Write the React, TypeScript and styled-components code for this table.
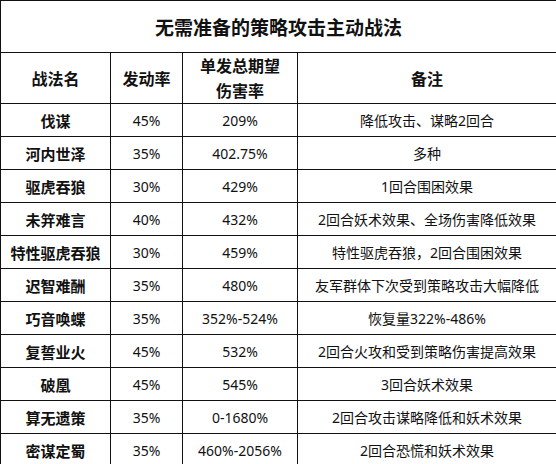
import React from 'react'
import styled, { createGlobalStyle } from 'styled-components'

const GlobalStyle = createGlobalStyle`
  html, body {
    margin: 0;
    padding: 0;
    background: #ffffff;
  }
  body {
    font-family: 'Noto Sans', 'Noto Sans CJK SC', sans-serif;
    color: #111;
  }
`

const TableContainer = styled.table`
  width: 556px;
  border-collapse: collapse;
  table-layout: fixed;
  background: #fff;
`

const Col = styled.col<{ w: number }>`
  width: ${({ w }) => w}px;
`

const Cell = styled.td`
  border: 1px solid #111;
  padding: 0;
  text-align: center;
  vertical-align: middle;
  white-space: nowrap;
`

const TitleCell = styled(Cell).attrs({ as: 'th' })`
  height: 51px;
  font-family: 'Noto Sans CJK SC', sans-serif;
  font-size: 19px;
  font-weight: 700;
  letter-spacing: 0;
`

const HeaderCell = styled(Cell).attrs({ as: 'th' })`
  height: 47px;
  font-family: 'Noto Sans CJK SC', sans-serif;
  font-size: 16px;
  font-weight: 700;
  line-height: 25px;
`

const TableRow = styled.tr`
  height: 33px;
`

const NameCell = styled(Cell)`
  height: 32px;
  font-family: 'Noto Sans CJK SC', sans-serif;
  font-size: 15px;
  font-weight: 700;
`

const DataCell = styled(Cell)`
  height: 32px;
  font-size: 14px;
  font-weight: 400;
`

interface Tactic {
  name: string
  rate: string
  damage: string
  note: string
}

const tactics: Tactic[] = [
  { name: '伐谋', rate: '45%', damage: '209%', note: '降低攻击、谋略2回合' },
  { name: '河内世泽', rate: '35%', damage: '402.75%', note: '多种' },
  { name: '驱虎吞狼', rate: '30%', damage: '429%', note: '1回合围困效果' },
  { name: '未笄难言', rate: '40%', damage: '432%', note: '2回合妖术效果、全场伤害降低效果' },
  { name: '特性驱虎吞狼', rate: '30%', damage: '459%', note: '特性驱虎吞狼，2回合围困效果' },
  { name: '迟智难酬', rate: '35%', damage: '480%', note: '友军群体下次受到策略攻击大幅降低' },
  { name: '巧音唤蝶', rate: '35%', damage: '352%-524%', note: '恢复量322%-486%' },
  { name: '复誓业火', rate: '45%', damage: '532%', note: '2回合火攻和受到策略伤害提高效果' },
  { name: '破凰', rate: '45%', damage: '545%', note: '3回合妖术效果' },
  { name: '算无遗策', rate: '35%', damage: '0-1680%', note: '2回合攻击谋略降低和妖术效果' },
  { name: '密谋定蜀', rate: '35%', damage: '460%-2056%', note: '2回合恐慌和妖术效果' },
]

const App = (): JSX.Element => {
  return (
    <>
      <GlobalStyle />
      <TableContainer>
        <colgroup>
          <Col w={110} />
          <Col w={72} />
          <Col w={115} />
          <Col w={259} />
        </colgroup>
        <thead>
          <tr>
            <TitleCell colSpan={4}>无需准备的策略攻击主动战法</TitleCell>
          </tr>
          <tr>
            <HeaderCell>战法名</HeaderCell>
            <HeaderCell>发动率</HeaderCell>
            <HeaderCell>
              单发总期望
              <br />
              伤害率
            </HeaderCell>
            <HeaderCell>备注</HeaderCell>
          </tr>
        </thead>
        <tbody>
          {tactics.map((item) => (
            <TableRow key={item.name}>
              <NameCell>{item.name}</NameCell>
              <DataCell>{item.rate}</DataCell>
              <DataCell>{item.damage}</DataCell>
              <DataCell>{item.note}</DataCell>
            </TableRow>
          ))}
        </tbody>
      </TableContainer>
    </>
  )
}

export default App
